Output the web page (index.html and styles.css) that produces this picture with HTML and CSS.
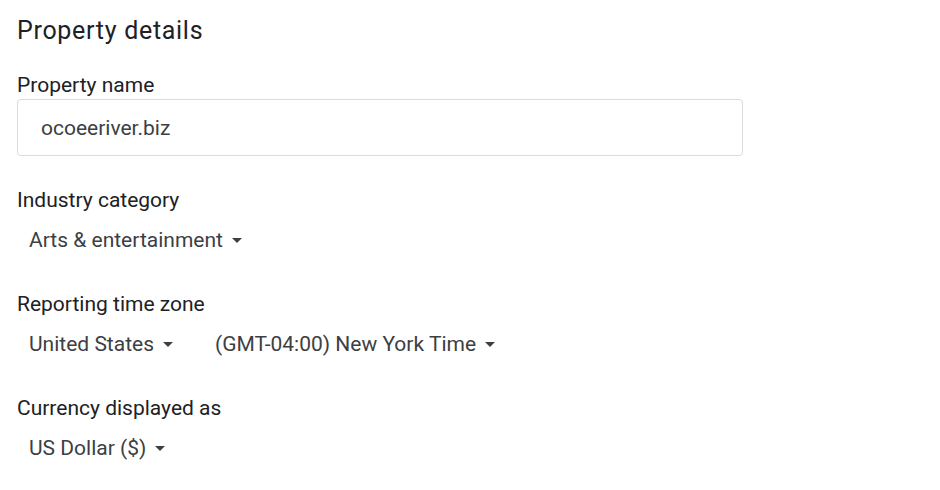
FILE: index.html
```html
<!DOCTYPE html>
<html>
<head>
<meta charset="utf-8">
<link rel="stylesheet" href="styles.css">
</head>
<body>
<div class="page">
  <h1 class="title">Property details</h1>
  <div class="field first">
    <div class="label">Property name</div>
    <div class="input">ocoeeriver.biz</div>
  </div>
  <div class="field">
    <div class="label">Industry category</div>
    <div class="row">
      <div class="select">Arts &amp; entertainment<span class="caret"></span></div>
    </div>
  </div>
  <div class="field">
    <div class="label">Reporting time zone</div>
    <div class="row">
      <div class="select">United States<span class="caret"></span></div>
      <div class="select">(GMT-04:00) New York Time<span class="caret"></span></div>
    </div>
  </div>
  <div class="field">
    <div class="label">Currency displayed as</div>
    <div class="row">
      <div class="select">US Dollar ($)<span class="caret"></span></div>
    </div>
  </div>
</div>
</body>
</html>
```
FILE: styles.css
```css
html, body {
  margin: 0;
  padding: 0;
  background: #ffffff;
}
body {
  font-family: Roboto, "Liberation Sans", Arial, sans-serif;
  color: #202124;
}
.page {
  padding: 15px 0 0 17px;
  display: flex;
  flex-direction: column;
}
.title {
  margin: 0;
  font-size: 25px;
  line-height: 32px;
  letter-spacing: 0.7px;
  font-weight: 400;
  color: #202124;
}
.field {
  display: flex;
  flex-direction: column;
  margin-top: 32px;
}
.field.first {
  margin-top: 26px;
}
.label {
  font-size: 21px;
  line-height: 24px;
  color: #202124;
}
.input {
  margin-top: 2px;
  width: 726px;
  height: 57px;
  box-sizing: border-box;
  border: 1px solid #dadce0;
  border-radius: 4px;
  padding: 0 0 0 23px;
  display: flex;
  align-items: center;
  font-size: 21px;
  color: #3c4043;
}
.row {
  margin-top: 8px;
  height: 40px;
  display: flex;
  align-items: center;
  gap: 18px;
}
.select {
  display: flex;
  align-items: center;
  padding: 0 12px;
  font-size: 21px;
  color: #3c4043;
}
.caret {
  margin-left: 9px;
  width: 0;
  height: 0;
  border-left: 5px solid transparent;
  border-right: 5px solid transparent;
  border-top: 5px solid #3c4043;
}
```
